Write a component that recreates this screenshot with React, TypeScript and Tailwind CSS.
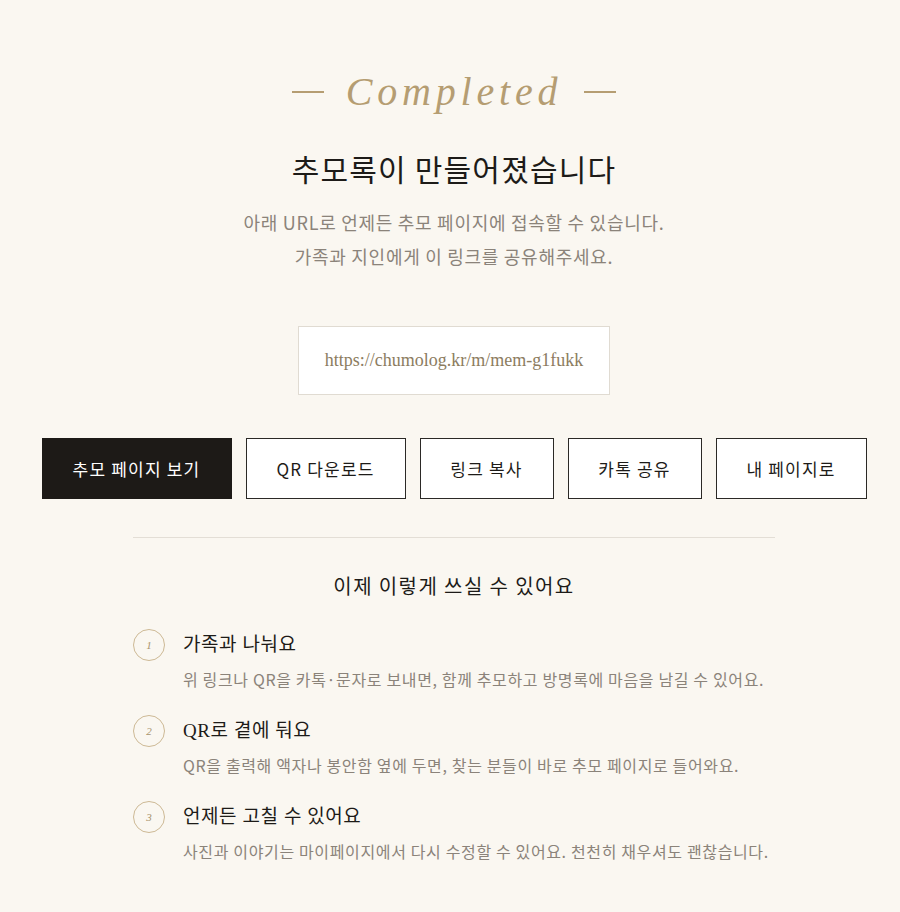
import React from 'react';

const KR = "font-['Noto_Sans_CJK_KR','Noto_Sans',sans-serif]";

const STEPS = [
  {
    n: '1',
    title: '가족과 나눠요',
    desc: '위 링크나 QR을 카톡·문자로 보내면, 함께 추모하고 방명록에 마음을 남길 수 있어요.',
  },
  {
    n: '2',
    title: 'QR로 곁에 둬요',
    desc: 'QR을 출력해 액자나 봉안함 옆에 두면, 찾는 분들이 바로 추모 페이지로 들어와요.',
  },
  {
    n: '3',
    title: '언제든 고칠 수 있어요',
    desc: '사진과 이야기는 마이페이지에서 다시 수정할 수 있어요. 천천히 채우셔도 괜찮습니다.',
  },
];

const ACTIONS = ['QR 다운로드', '링크 복사', '카톡 공유', '내 페이지로'];

export default function App() {
  return (
    <div className={`min-h-[912px] w-full bg-[#faf7f1] pl-2 ${KR}`}>
      <div className="flex flex-col items-center pt-[64px]">
        {/* eyebrow */}
        <div className="flex items-center gap-[22px] font-['Liberation_Serif',serif] italic text-[40px] leading-[56px] text-[#b59d72]">
          <span className="inline-block w-[32px] h-[2px] bg-[#b59d72]" />
          <span className="tracking-[0.12em]">Completed</span>
          <span className="inline-block w-[32px] h-[2px] bg-[#b59d72]" />
        </div>

        <h1 className="mt-[28px] text-[30px] leading-[40px] text-[#1d1b18] tracking-[0.04em]">
          추모록이 만들어졌습니다
        </h1>
        <p className="mt-[17px] text-center text-[18px] leading-[34px] tracking-[0.04em] text-[#8b837a]">
          아래 URL로 언제든 추모 페이지에 접속할 수 있습니다.
          <br />
          가족과 지인에게 이 링크를 공유해주세요.
        </p>

        {/* url box */}
        <div className="mt-[53px] w-[312px] h-[69px] flex items-center justify-center bg-white border border-[#e0dbd2]">
          <span className="font-['Liberation_Serif',serif] text-[18px] text-[#8c7c60]">
            https://chumolog.kr/m/mem-g1fukk
          </span>
        </div>

        {/* actions */}
        <div className="mt-[43px] flex gap-[14px]">
          <button className="h-[61px] bg-[#1d1a17] text-white text-[17px] tracking-[0.07em] w-[190px]">
            추모 페이지 보기
          </button>
          {ACTIONS.map((a, i) => (
            <button
              key={a}
              className={`h-[61px] bg-white border border-[#2b2926] text-[17px] tracking-[0.07em] text-[#1d1b18] ${
                i === 0 ? 'w-[160px]' : i === 3 ? 'w-[151px]' : 'w-[134px]'
              }`}
            >
              {a}
            </button>
          ))}
        </div>

        <div className="mt-[38px] w-[642px] h-px bg-[#e3ded6]" />

        <h2 className="mt-[34px] text-[20px] leading-[28px] tracking-[0.07em] text-[#1d1b18]">
          이제 이렇게 쓰실 수 있어요
        </h2>

        {/* steps */}
        <div className="mt-[29px] w-[642px] flex flex-col gap-[24px]">
          {STEPS.map((s) => (
            <div key={s.n} className="flex gap-[18px]">
              <div className="w-[32px] h-[32px] shrink-0 rounded-full border border-[#cdb995] flex items-center justify-center font-['Liberation_Serif',serif] italic text-[11px] text-[#a8936c]">
                {s.n}
              </div>
              <div className="flex flex-col">
                <div className="text-[19px] leading-[32px] tracking-[0.03em] text-[#1d1b18] font-['Liberation_Serif','Noto_Sans_CJK_KR',serif]">
                  {s.title}
                </div>
                <div className="mt-[6px] text-[16px] leading-[24px] tracking-[0.04em] text-[#8b837a] whitespace-nowrap">
                  {s.desc}
                </div>
              </div>
            </div>
          ))}
        </div>
      </div>
    </div>
  );
}
